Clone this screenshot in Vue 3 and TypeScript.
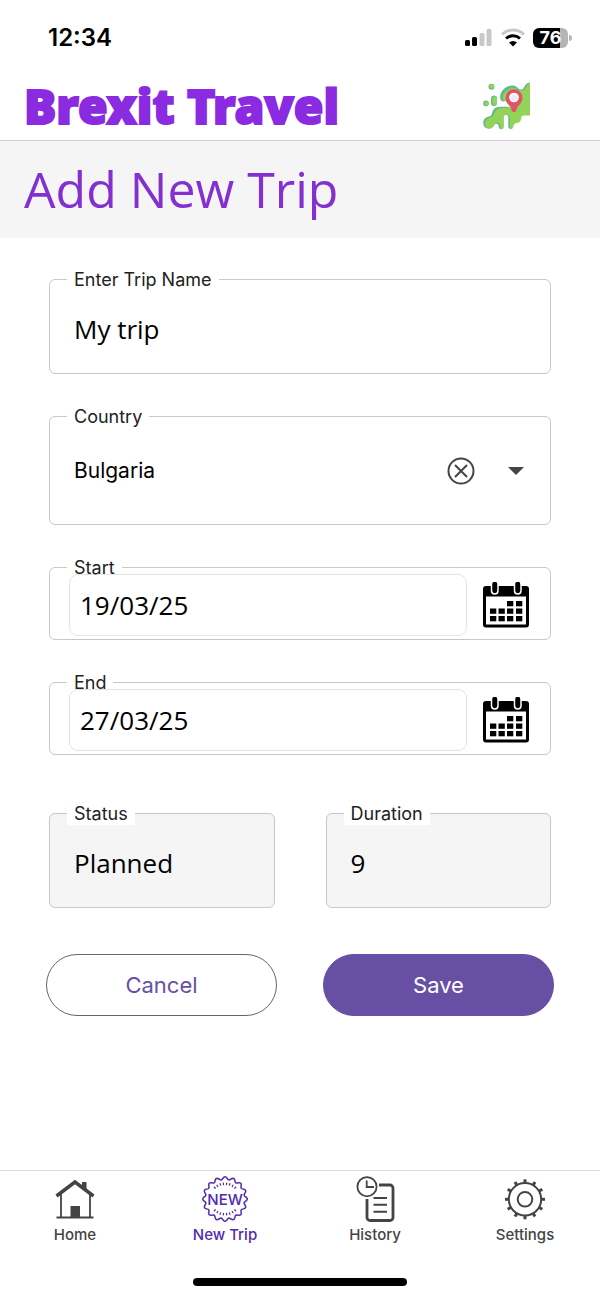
<script setup lang="ts">
import { computed, ref } from 'vue'

type TabId = 'home' | 'new' | 'history' | 'settings'

const tripName = ref('My trip')
const country = ref('Bulgaria')
const countries = ['Bulgaria']
const countrySelect = ref<HTMLSelectElement | null>(null)
const dates = ref([
  { id: 'start', label: 'Start', value: '19/03/25' },
  { id: 'end', label: 'End', value: '27/03/25' },
])
const status = ref('Planned')

const toDay = (text: string): number => {
  const [day, month, year] = text.split('/').map(Number)
  return Date.UTC(2000 + year, month - 1, day) / 86400000
}
const duration = computed(() => {
  const days = toDay(dates.value[1].value) - toDay(dates.value[0].value) + 1
  return Number.isFinite(days) ? String(days) : ''
})

const tabs: { id: TabId; label: string }[] = [
  { id: 'home', label: 'Home' },
  { id: 'new', label: 'New Trip' },
  { id: 'history', label: 'History' },
  { id: 'settings', label: 'Settings' },
]
const active = ref<TabId>('new')

const calendarCells = [
  [24, 19], [33, 19],
  [7, 26.5], [15.5, 26.5], [24, 26.5], [33, 26.5],
  [7, 34], [15.5, 34], [24, 34], [33, 34],
]

// Scalloped outline of the badge
const badgePath = Array.from({ length: 193 }, (_, i) => {
  const angle = (i / 192) * Math.PI * 2
  const r = 20.9 + 1.4 * Math.cos(16 * angle)
  const x = 23 + r * Math.sin(angle)
  const y = 23 - r * Math.cos(angle)
  return `${i ? 'L' : 'M'}${x.toFixed(2)} ${y.toFixed(2)}`
}).join('')
const badgeRays = [-42, -30, -18, -6, 6, 18, 30, 42].flatMap((a) => [a, a + 180])
const gearTeeth = Array.from({ length: 12 }, (_, i) => i * 30)

const openCountries = () => countrySelect.value?.showPicker()
</script>

<template>
  <div class="page">
    <div class="status-bar">
      <span class="time">12:34</span>
      <div class="indicators">
        <svg class="signal" viewBox="0 0 28 20" aria-hidden="true">
          <rect x="0" y="12" width="5" height="6" rx="1.5" />
          <rect x="7" y="9" width="5" height="9" rx="1.5" />
          <rect x="14.5" y="5" width="5" height="13" rx="1.5" fill="#c8c8c8" />
          <rect x="21.5" y="1" width="5" height="17" rx="1.5" fill="#c8c8c8" />
        </svg>
        <svg class="wifi" viewBox="0 0 24 20" aria-hidden="true">
          <path d="M1 6.500a15.500 15.500 0 0 1 22 0" fill="none" stroke="#c8c8c8" stroke-width="3" />
          <path d="M5 10.500a10.500 10.500 0 0 1 14 0" fill="none" stroke="#000" stroke-width="3" />
          <path d="M8 14.500a6 6 0 0 1 8 0l-4 4z" />
        </svg>
        <div class="battery"><span class="battery-level">76</span></div>
      </div>
    </div>

    <header class="brand">
      <span class="brand-name">Brexit Travel</span>
      <svg class="brand-map" viewBox="0 0 48 48" aria-hidden="true">
        <g fill="#62b98a">
          <circle cx="8.5" cy="4.700" r="3" />
          <circle cx="3" cy="21.400" r="2.800" />
          <rect x="8" y="13.500" width="6" height="10.500" rx="3" />
          <path d="M20 19.500c-3.500-1-3.500-6-1.500-9.500C21 5.500 27 2.500 32 4c3 1 3.500 4 7 3.500C42 7 40.500 1.500 47 .5V20H25z" />
          <path d="M.3 41c0-4 2.700-6 5.700-6.500 4-.5 2-4 5-7.500 2-2 6-2.500 14-2.500L36 36l-6.500 8c0 4-4.200 4-4.200 0V35c0-3-5-3-5 0v9.500c0 3.500-4.500 3.500-4.500 0 0-3.500-4-3.500-5-1C9 48 .3 48 .3 41z" />
        </g>
        <path fill="#93d35a" d="M22 19.500c-3-1-2.500-5.500-.5-8.500C24 7 29 5 33 6.500c2.500 1 5 3.500 8 1.500 3-2 2-6 6-7V33.500h-6.500c-3.500.5-1.500 4-3.500 6-2.500 2.500-6 1-6.500 4-.5 4.500-3.500 4.500-3.700.5V35c0-3.500-6-3.500-6 0v9.500c0 3.500-3.300 3.500-3.300 0 0-2.500-1.500-4-3.500-4-3.500 0-2 6-7.500 6C.5 46.500.500 38 6 36c6-1 4-5 7-8 3-2.500 6-2 12-2.500l2-3z" />
        <path fill="#fff" d="M19.500 20.500L27 17l2 7.500H19z" />
        <circle cx="9" cy="4.500" r="2.200" fill="#93d35a" />
        <circle cx="3.500" cy="21.500" r="2" fill="#93d35a" />
        <rect x="9.500" y="14.500" width="4.500" height="8.500" rx="2.200" fill="#93d35a" />
        <path fill="#df5663" d="M31 30c-1.800 0-2.700-1-2.700-3 0-3-5.800-5-5.800-11.300a8.500 8.500 0 0 1 17 0C39.500 22 33.700 24 33.700 27c0 2-.9 3-2.700 3z" />
        <circle cx="31" cy="15.500" r="4.800" fill="#fff" />
        <circle cx="31.300" cy="15.800" r="3.300" fill="#f1eaf7" />
      </svg>
    </header>

    <div class="title-bar"><h1>Add New Trip</h1></div>

    <form class="form" @submit.prevent>
      <div class="field">
        <label for="trip-name">Enter Trip Name</label>
        <input id="trip-name" v-model="tripName" type="text" />
      </div>

      <div class="field country">
        <label for="country">Country</label>
        <select id="country" ref="countrySelect" v-model="country">
          <option v-for="name in countries" :key="name" :value="name">{{ name }}</option>
        </select>
        <button class="icon-button" type="button" aria-label="Clear country" @click="country = ''">
          <svg class="clear-icon" viewBox="0 0 28 28" aria-hidden="true">
            <circle cx="14" cy="14" r="12.500" />
            <path d="M8 8l12 12M20 8L8 20" />
          </svg>
        </button>
        <button class="icon-button" type="button" aria-label="Show countries" @click="openCountries">
          <svg class="arrow-icon" viewBox="0 0 16 8" aria-hidden="true"><path d="M0 0h16L8 8z" /></svg>
        </button>
      </div>

      <div v-for="date in dates" :key="date.id" class="field date">
        <label :for="date.id">{{ date.label }}</label>
        <input :id="date.id" v-model="date.value" type="text" />
        <button class="icon-button" type="button" :aria-label="`Pick ${date.label} date`">
          <svg class="calendar-icon" viewBox="0 0 46 46" aria-hidden="true">
            <rect x="0" y="4" width="46" height="41.500" rx="3" />
            <rect x="3" y="14.500" width="40" height="28" fill="#fff" />
            <rect v-for="x in [8.500, 31.500]" :key="x" :x="x" y="-1" width="6.500" height="13" rx="3.200" stroke="#fff" stroke-width="1.500" />
            <rect v-for="cell in calendarCells" :key="cell.join()" :x="cell[0]" :y="cell[1]" width="6.300" height="5.300" />
          </svg>
        </button>
      </div>

      <div class="pair summary">
        <div class="field readonly">
          <label for="status">Status</label>
          <input id="status" :value="status" type="text" readonly />
        </div>
        <div class="field readonly">
          <label for="duration">Duration</label>
          <input id="duration" :value="duration" type="text" readonly />
        </div>
      </div>

      <div class="pair actions">
        <button class="action" type="button">Cancel</button>
        <button class="action primary" type="submit">Save</button>
      </div>
    </form>

    <nav class="tabs">
      <button
        v-for="tab in tabs"
        :key="tab.id"
        class="tab"
        :class="{ active: active === tab.id }"
        type="button"
        @click="active = tab.id"
      >
        <svg viewBox="0 0 46 46" aria-hidden="true">
          <g v-if="tab.id === 'home'">
            <path d="M31 13V7h2.500v8" stroke-width="2" fill="currentColor" />
            <path d="M4.500 20L23 6l18.500 14" stroke-width="3.500" />
            <path d="M9 18v23.500M38 18v23.500M4.500 41.500h37" stroke-width="1.800" />
            <rect x="18.500" y="30" width="9.500" height="11" fill="currentColor" stroke="none" />
          </g>
          <g v-else-if="tab.id === 'new'">
            <path :d="badgePath" stroke-width="1.500" />
            <path
              v-for="ray in badgeRays"
              :key="ray"
              d="M23 6.500v2.500"
              stroke-width="1.200"
              :transform="`rotate(${ray} 23 23)`"
            />
            <text class="badge-text" x="23" y="29" text-anchor="middle">NEW</text>
          </g>
          <g v-else-if="tab.id === 'history'">
            <circle cx="15" cy="10.700" r="9.600" stroke-width="1.800" />
            <path d="M14.700 4.500V11H22" stroke-width="1.800" />
            <path d="M15 23v18.500a3 3 0 0 0 3 3h20a3 3 0 0 0 3-3V12a3 3 0 0 0-3-3H27" stroke-width="2.800" />
            <path d="M21.500 22H35M21.500 28.700H35M21.500 35.700H35" stroke-width="2" />
          </g>
          <g v-else>
            <circle cx="23" cy="23.300" r="16.200" stroke-width="2" />
            <circle cx="23" cy="23.300" r="7.300" stroke-width="2" />
            <path
              v-for="tooth in gearTeeth"
              :key="tooth"
              d="M23 3.300v4"
              stroke-width="3"
              :transform="`rotate(${tooth} 23 23.300)`"
            />
          </g>
        </svg>
        <span>{{ tab.label }}</span>
      </button>
    </nav>
    <div class="home-indicator"></div>
  </div>
</template>

<style>
body {
  margin: 0;
  background: #fff;
}
</style>

<style scoped>
.page {
  display: flex;
  flex-direction: column;
  min-height: 100vh;
  box-sizing: border-box;
  background: #fff;
  color: #000;
  font-family: Inter, "Liberation Sans", sans-serif;
}

button,
input,
select {
  font: inherit;
  color: inherit;
  margin: 0;
  padding: 0;
  border: 0;
  background: none;
}

.status-bar {
  display: flex;
  align-items: center;
  justify-content: space-between;
  height: 76px;
  padding: 0 32px 0 48px;
}

.time {
  font-size: 24px;
  font-weight: 600;
  line-height: 28px;
}

.indicators {
  display: flex;
  align-items: center;
  gap: 8px;
}

.signal {
  width: 28px;
  height: 20px;
}

.wifi {
  width: 24px;
  height: 20px;
}

.battery {
  position: relative;
  width: 35px;
  height: 20px;
  border-radius: 6px;
  background: linear-gradient(to right, #000 76%, #b5b5b5 76%);
  text-align: center;
}

.battery::after {
  content: "";
  position: absolute;
  top: 7px;
  right: -4px;
  width: 3px;
  height: 6px;
  border-radius: 0 3px 3px 0;
  background: #b5b5b5;
}

.battery-level {
  color: #fff;
  font-size: 18px;
  font-weight: 700;
  line-height: 20px;
}

.brand {
  display: flex;
  align-items: center;
  justify-content: space-between;
  height: 60px;
  padding: 0 69px 4px 24px;
  border-bottom: 1px solid #cfcfcf;
}

.brand-name {
  color: #8a2be2;
  font-family: "Noto Sans", sans-serif;
  font-size: 48px;
  font-weight: 900;
  line-height: 56px;
  -webkit-text-stroke: 2px #8a2be2;
}

.brand-map {
  width: 48px;
  height: 48px;
}

.title-bar {
  padding: 16px 24px 17px;
  background: #f5f5f5;
}

h1 {
  margin: 0;
  color: #8430d0;
  font-family: "Open Sans", "Noto Sans", sans-serif;
  font-size: 50px;
  font-weight: 400;
  line-height: 64px;
}

.form {
  display: flex;
  flex: 1;
  flex-direction: column;
  gap: 42px;
  padding: 41px 49px;
}

.field {
  position: relative;
  display: flex;
  align-items: center;
  min-width: 0;
  height: 95px;
  box-sizing: border-box;
  padding: 4px 24px 0;
  border: 1px solid #c8c8c8;
  border-radius: 6px;
}

.field label {
  position: absolute;
  top: -11px;
  left: 17px;
  padding: 0 7px;
  background: #fff;
  color: #222;
  font-size: 18px;
  line-height: 22px;
}

.field input {
  flex: 1;
  width: 100%;
  min-width: 0;
  font-family: "Open Sans", "Noto Sans", sans-serif;
  font-size: 26px;
  line-height: 36px;
}

.country {
  height: 109px;
  padding: 0 26px 0 24px;
  gap: 33px;
}

.country select {
  flex: 1;
  min-width: 0;
  appearance: none;
  font-size: 21px;
  line-height: 32px;
}

.icon-button {
  display: flex;
  cursor: pointer;
}

.clear-icon {
  width: 28px;
  height: 28px;
  fill: none;
  stroke: #444;
  stroke-width: 2;
}

.arrow-icon {
  width: 16px;
  height: 8px;
  fill: #444;
}

.date {
  height: 73px;
  padding: 2px 21px 0 19px;
  gap: 16px;
}

.date label {
  top: -6px;
  line-height: 12px;
}

.date input {
  height: 62px;
  box-sizing: border-box;
  padding: 0 10px;
  border: 1px solid #e4e4e4;
  border-radius: 9px;
}

.calendar-icon {
  width: 46px;
  height: 46px;
}

.pair {
  display: grid;
  grid-template-columns: 1fr 1fr;
}

.summary {
  gap: 51px;
  margin-top: 16px;
}

.readonly {
  background: #f5f5f5;
}

.actions {
  gap: 46px;
  margin: 4px -3px 0;
}

.action {
  height: 62px;
  border: 1px solid #666;
  border-radius: 31px;
  color: #6750a4;
  font-size: 22px;
  line-height: 32px;
  cursor: pointer;
}

.action.primary {
  border-color: #6750a4;
  background: #6750a4;
  color: #fff;
}

.tabs {
  display: flex;
  border-top: 1px solid #dcdcdc;
}

.tab {
  display: flex;
  flex: 1;
  flex-direction: column;
  align-items: center;
  gap: 1px;
  padding: 5px 0 0;
  color: #444;
  font-size: 15px;
  font-weight: 500;
  line-height: 24px;
  cursor: pointer;
}

.tab svg {
  width: 46px;
  height: 46px;
  fill: none;
  stroke: currentColor;
}

.tab.active {
  color: #4f2bb0;
}

.badge-text {
  fill: currentColor;
  stroke: none;
  font-size: 15px;
  font-weight: 500;
}

.home-indicator {
  align-self: center;
  width: 214px;
  height: 8px;
  margin: 31px 0 12px;
  border-radius: 4px;
  background: #000;
}
</style>
